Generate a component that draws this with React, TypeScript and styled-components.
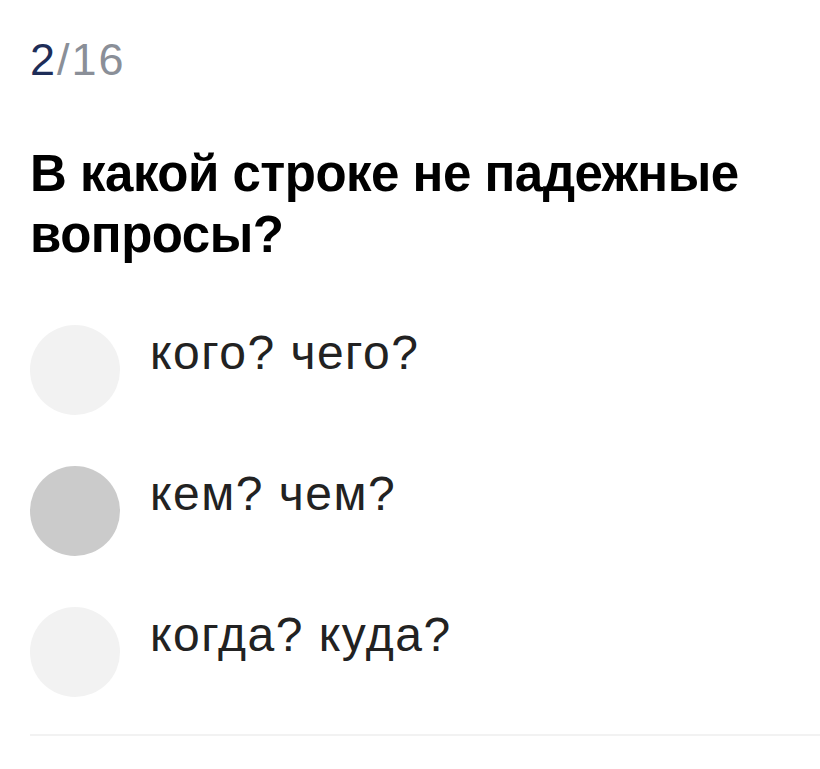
import React from "react";
import styled, { createGlobalStyle } from "styled-components";

const Global = createGlobalStyle`
  html, body { margin: 0; padding: 0; background: #ffffff; }
  body { font-family: "Liberation Sans", Arial, sans-serif; }
`;

const Page = styled.div`
  padding: 34px 0 0 30px;
  display: flex;
  flex-direction: column;
`;

const Counter = styled.div`
  font-size: 45px;
  line-height: 52px;
  color: #8a8f98;
  letter-spacing: 2px;
`;

const Current = styled.span`
  color: #1e2d58;
`;

const Title = styled.h1`
  margin: 57px 0 0 0;
  font-size: 51px;
  line-height: 61px;
  font-weight: 700;
  letter-spacing: -0.5px;
  color: #000;
  max-width: 770px;
`;

const Options = styled.div`
  margin-top: 60px;
  display: flex;
  flex-direction: column;
  gap: 51px;
`;

const Option = styled.div`
  display: flex;
  align-items: flex-start;
  gap: 30px;
`;

const Circle = styled.div<{ $selected?: boolean }>`
  width: 90px;
  height: 90px;
  border-radius: 50%;
  flex: none;
  background: ${(p) => (p.$selected ? "#cbcbcb" : "#f2f2f2")};
`;

const Label = styled.div`
  font-size: 48px;
  line-height: 56px;
  letter-spacing: 1.5px;
  color: #222;
`;

const Divider = styled.div`
  margin-top: 37px;
  height: 2px;
  background: #f2f2f2;
`;

export default function App() {
  const options = [
    { text: "кого? чего?", selected: false },
    { text: "кем? чем?", selected: true },
    { text: "когда? куда?", selected: false },
  ];
  return (
    <>
      <Global />
      <Page>
        <Counter>
          <Current>2</Current>/16
        </Counter>
        <Title>В какой строке не падежные вопросы?</Title>
        <Options>
          {options.map((o) => (
            <Option key={o.text}>
              <Circle $selected={o.selected} />
              <Label>{o.text}</Label>
            </Option>
          ))}
        </Options>
        <Divider />
      </Page>
    </>
  );
}
